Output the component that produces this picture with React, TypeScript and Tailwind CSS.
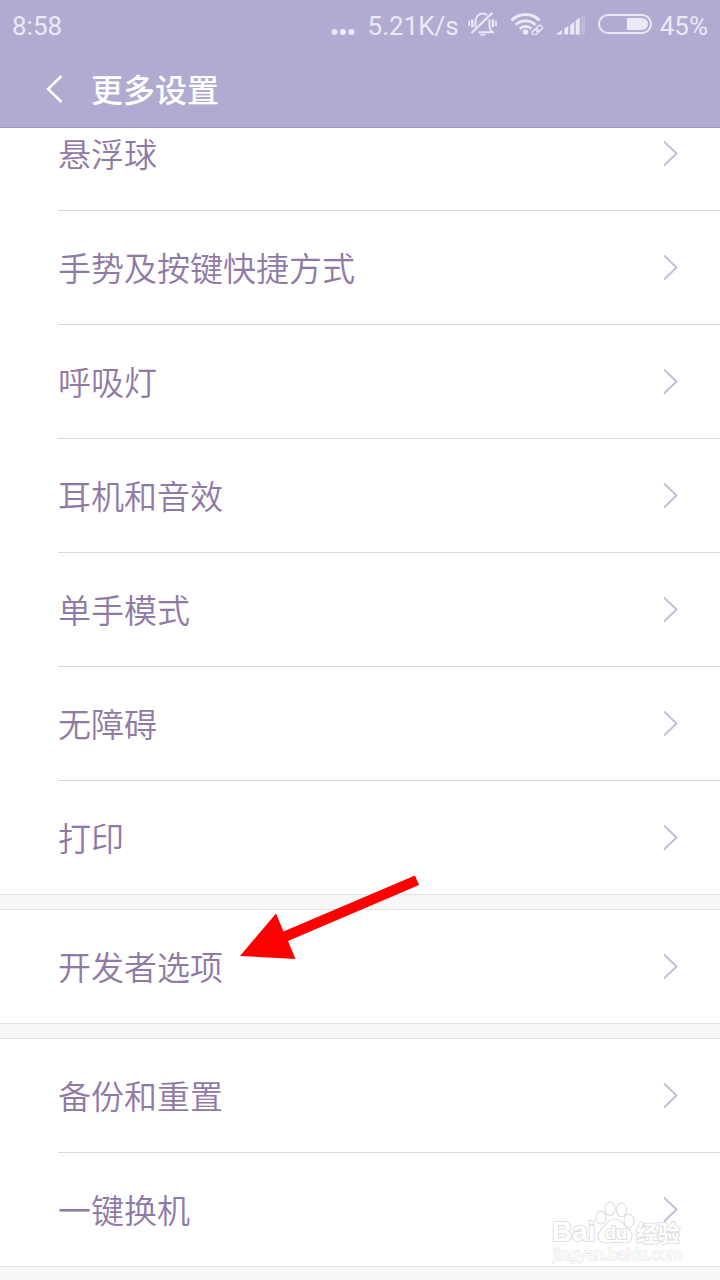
const groups = [
    ["悬浮球", "手势及按键快捷方式", "呼吸灯", "耳机和音效", "单手模式", "无障碍", "打印"],
    ["开发者选项"],
    ["备份和重置", "一键换机"],
];

function BellOffIcon() {
    return (
        <svg width="29" height="24" viewBox="0 0 29 24" fill="none" stroke="currentColor" aria-hidden="true">
            <path d="M7.500 15V9.500C7.500 5 10.500 1.500 14.800 1.500c1.700 0 3.200.5 4.400 1.500" strokeWidth="2" />
            <path d="M21.500 7.500V15c0 2 1 3.500 3 5.300H10.500" strokeWidth="2" />
            <path d="M3.500 21L24.500 .8" strokeWidth="2.200" />
            <path d="M11.500 22h6.500a3.300 2 0 0 1-6.500 0z" fill="currentColor" stroke="none" />
            <path d="M4.300 7.300v8M25 7.300v8" strokeWidth="2.400" />
            <path d="M1.200 8.700v5.300M28 8.700v5.300" strokeWidth="1.800" />
        </svg>
    );
}

function WifiIcon() {
    return (
        <svg width="33" height="22" viewBox="0 0 33 22" fill="none" stroke="currentColor" aria-hidden="true">
            <path d="M1.500 7.500C9-.5 22-.5 29.500 7.500" strokeWidth="2.800" />
            <path d="M5.500 11.800c5.500-5.300 14.500-5.300 20 0" strokeWidth="2.800" />
            <path d="M9.800 15.800c3.300-3.200 8.200-3.200 11.500 0" strokeWidth="2.600" />
            <circle cx="15.500" cy="19" r="2.700" fill="currentColor" stroke="none" />
            <g transform="rotate(-43 27 17)" strokeWidth="1.400">
                <rect x="21" y="15" width="7" height="4.500" rx="2.200" />
                <rect x="26" y="15" width="7" height="4.500" rx="2.200" />
            </g>
        </svg>
    );
}

function SignalIcon() {
    return (
        <svg width="29" height="22" viewBox="0 0 29 22" fill="currentColor" aria-hidden="true">
            <path d="M0 21.500l6-4.500v4.500zM8.300 15.500l4-2.500v8.500h-4zM14.200 12l4-3v12.500h-4zM19.700 7.500l4-3v17h-4z" />
            <path d="M25.200 3.500L29 .5v21h-3.800z" opacity=".25" />
        </svg>
    );
}

function BatteryIcon() {
    return (
        <svg width="54" height="20" viewBox="0 0 54 20" fill="none" aria-hidden="true">
            <rect x="1" y="1" width="52" height="18" rx="9" stroke="currentColor" strokeWidth="2" />
            <path d="M29 4h15a6 6 0 0 1 0 12H29z" fill="currentColor" />
        </svg>
    );
}

function StatusBar() {
    return (
        <div className="flex h-[50px] items-center justify-between px-3 pb-0.5 text-[26px] text-[#ebe9f4]">
            <span className="pt-1">8:58</span>
            <div className="flex items-center gap-[13px]">
                <svg className="mt-4" width="24" height="6" viewBox="0 0 24 6" fill="currentColor" aria-hidden="true">
                    <circle cx="3.500" cy="3" r="3" />
                    <circle cx="12" cy="3" r="3" />
                    <circle cx="20.500" cy="3" r="3" />
                </svg>
                <span className="-mr-1 pt-1">5.21K/s</span>
                <BellOffIcon />
                <WifiIcon />
                <SignalIcon />
                <div className="flex items-center gap-2">
                    <BatteryIcon />
                    <span className="pt-1">45%</span>
                </div>
            </div>
        </div>
    );
}

function SettingRow({ label }: { label: string }) {
    return (
        <li className="ml-[58px] border-b border-[#d9d9d9] last:border-b-0">
            <button type="button" className="flex h-[113px] w-full items-center justify-between pr-[42px] text-left">
                <span className="pt-1 text-[33px] font-[350] text-[#8f7aa6]">{label}</span>
                <svg width="15" height="27" viewBox="0 0 15 27" fill="none" stroke="#c8bcd8" strokeWidth="2" aria-hidden="true">
                    <path d="M1 1.500l12.500 12L1 25.500" />
                </svg>
            </button>
        </li>
    );
}

function Arrow() {
    return (
        <svg className="pointer-events-none absolute -top-[35px] left-[240px]" width="180" height="86" viewBox="0 0 180 86" aria-hidden="true">
            <path d="M0 81l36-42.500 7.500 18L175 .5l4 9.500L48 66l7.500 18z" fill="#ff0000" />
        </svg>
    );
}

function Watermark() {
    return (
        <svg
            className="pointer-events-none absolute right-[38px] bottom-0 font-['Liberation_Sans','Noto_Sans_CJK_SC',sans-serif]"
            width="132"
            height="66"
            viewBox="0 0 132 66"
            fill="#ffffff"
            stroke="#e0e0e0"
            strokeWidth="1.200"
        >
            <ellipse cx="51" cy="17.700" rx="5" ry="6.500" />
            <ellipse cx="60" cy="8.700" rx="5" ry="7" />
            <ellipse cx="71.500" cy="10" rx="5" ry="7" />
            <ellipse cx="79" cy="20.700" rx="5" ry="6.500" />
            <path d="M64.500 19c6 0 8 4 12 8 3.500 3 6 5.500 5.500 10-.6 4.500-4 6-8.500 5.700-6-.6-10-.6-16 .3-5 .5-9-1.500-9.500-6.500-.3-4 2-6.500 5.500-9.500 4-4 5.500-8 11-8z" />
            <g paintOrder="stroke" strokeWidth="2">
                <text x="2" y="41" fontSize="28" fontWeight="700">Bai</text>
                <text x="55" y="39" fontSize="18" fontWeight="700">du</text>
                <text x="86" y="41" fontSize="22" fontWeight="700">经验</text>
                <text x="3" y="60" fontSize="16" strokeWidth="1">jingyan.baidu.com</text>
            </g>
        </svg>
    );
}

export default function App() {
    return (
        <div className="flex min-h-screen flex-col bg-[#f7f7f7] font-['Roboto','Noto_Sans_CJK_SC',sans-serif]">
            <header className="z-10 border-b border-[#9f97c0] bg-[#b1abd1]">
                <StatusBar />
                <div className="flex h-[77px] items-center gap-7 pl-[46px] text-white">
                    <button type="button" aria-label="返回">
                        <svg width="17" height="28" viewBox="0 0 17 28" fill="none" stroke="currentColor" strokeWidth="2.500" aria-hidden="true">
                            <path d="M15.500 1L2 14l13.500 13" />
                        </svg>
                    </button>
                    <h1 className="pt-1 text-[32px] font-medium">更多设置</h1>
                </div>
            </header>
            <main className="overflow-hidden pb-[13px]">
                {/* list is scrolled a little under the header */}
                <div className="-mt-8 flex flex-col gap-[14px]">
                    {groups.map((rows, i) => (
                        <section key={rows[0]} className="relative border-y border-[#e2e2e2] bg-white">
                            <ul>
                                {rows.map((label) => (
                                    <SettingRow key={label} label={label} />
                                ))}
                            </ul>
                            {i === 1 && <Arrow />}
                            {i === 2 && <Watermark />}
                        </section>
                    ))}
                </div>
            </main>
        </div>
    );
}
